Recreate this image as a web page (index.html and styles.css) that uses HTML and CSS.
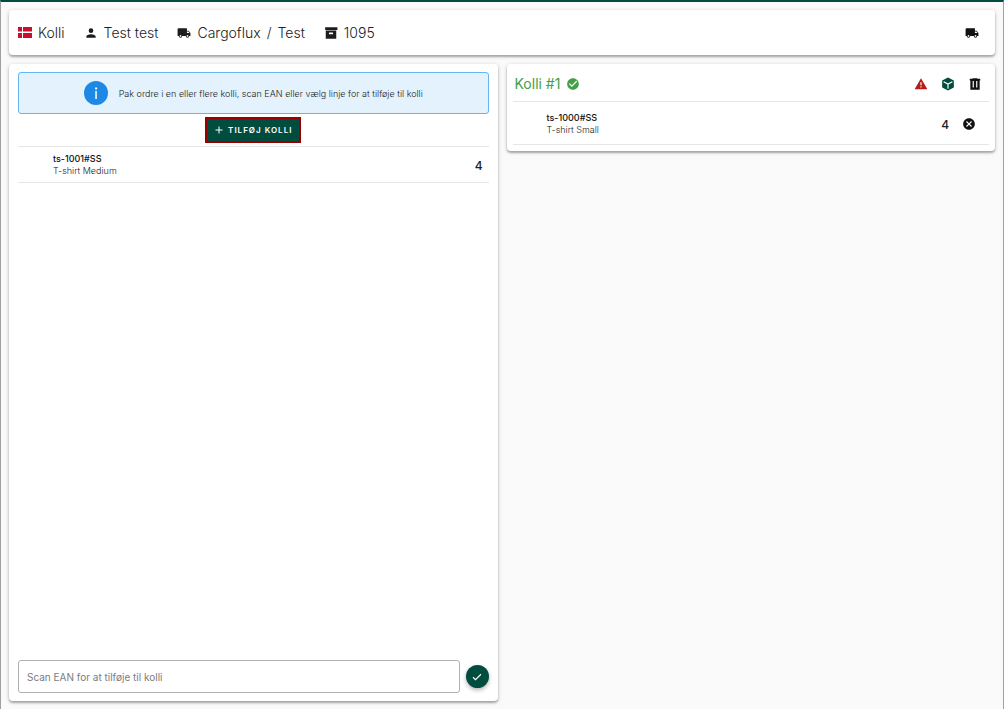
FILE: index.html
```html
<!DOCTYPE html>
<html lang="da">
<head>
    <meta charset="UTF-8">
    <meta name="viewport" content="width=device-width, initial-scale=1.0">
    <title>Kolli</title>
    <link rel="stylesheet" href="styles.css">
</head>
<body>
    <header class="card order-bar">
        <h1 class="order-item">
            <svg class="flag" viewBox="0 0 14 11" aria-hidden="true">
                <path fill="#c8102e" d="M0 0h4v4.5H0zM5 0h9v4.5H5zM0 6h4v5H0zM5 6h9v5H5z"/>
            </svg>
            Kolli
        </h1>
        <div class="order-item">
            <svg class="icon" viewBox="0 0 24 24" aria-hidden="true"><path d="M12 4a4 4 0 0 1 4 4 4 4 0 0 1-4 4 4 4 0 0 1-4-4 4 4 0 0 1 4-4m0 10c4.42 0 8 1.79 8 4v2H4v-2c0-2.21 3.58-4 8-4z"/></svg>
            Test test
        </div>
        <div class="order-item">
            <svg class="icon" viewBox="0 0 24 24" aria-hidden="true"><path d="M18 18.5a1.5 1.5 0 0 1-1.5-1.5 1.5 1.5 0 0 1 1.5-1.5 1.5 1.5 0 0 1 1.5 1.5 1.5 1.5 0 0 1-1.5 1.5m1.5-9 1.96 2.5H17V9.5m-11 9A1.5 1.5 0 0 1 4.5 17 1.5 1.5 0 0 1 6 15.5 1.5 1.5 0 0 1 7.5 17 1.5 1.5 0 0 1 6 18.5M20 8h-3V4H3c-1.11 0-2 .89-2 2v11h2a3 3 0 0 0 3 3 3 3 0 0 0 3-3h6a3 3 0 0 0 3 3 3 3 0 0 0 3-3h2v-5z"/></svg>
            <span>Cargoflux</span><span>/</span><span>Test</span>
        </div>
        <div class="order-item">
            <svg class="icon" viewBox="0 0 24 24" aria-hidden="true"><path d="M2 2h21v5H2zM3 7.5h18V22H3zM9 11a.5.5 0 0 0-.5.5V14h7v-2.5a.5.5 0 0 0-.5-.5z" fill-rule="evenodd"/></svg>
            1095
        </div>
        <button class="icon-button ship" type="button" aria-label="Forsendelse">
            <svg class="icon" viewBox="0 0 24 24" aria-hidden="true"><path d="M18 18.5a1.5 1.5 0 0 1-1.5-1.5 1.5 1.5 0 0 1 1.5-1.5 1.5 1.5 0 0 1 1.5 1.5 1.5 1.5 0 0 1-1.5 1.5m1.5-9 1.96 2.5H17V9.5m-11 9A1.5 1.5 0 0 1 4.5 17 1.5 1.5 0 0 1 6 15.5 1.5 1.5 0 0 1 7.5 17 1.5 1.5 0 0 1 6 18.5M20 8h-3V4H3c-1.11 0-2 .89-2 2v11h2a3 3 0 0 0 3 3 3 3 0 0 0 3-3h6a3 3 0 0 0 3 3 3 3 0 0 0 3-3h2v-5z"/></svg>
        </button>
    </header>

    <main class="columns">
        <section class="card order-lines">
            <div class="info-box">
                <svg class="info-icon" viewBox="0 0 24 24" aria-hidden="true">
                    <circle cx="12" cy="12" r="12" fill="#1e88e5"/>
                    <path fill="#fff" d="M11.3 10h1.5v8h-1.500zM11.100 6.500h2v2h-2z"/>
                </svg>
                <p>Pak ordre i en eller flere kolli, scan EAN eller vælg linje for at tilføje til kolli</p>
            </div>
            <button class="add-button" type="button">
                <svg viewBox="0 0 10 10" aria-hidden="true"><path d="M5 1.5v7M1.5 5h7" stroke="#fff" stroke-width="1"/></svg>
                TILFØJ KOLLI
            </button>
            <ul class="lines">
                <li class="line">
                    <div class="product">
                        <strong>ts-1001#SS</strong>
                        <span>T-shirt Medium</span>
                    </div>
                    <span class="quantity">4</span>
                </li>
            </ul>
            <form class="scan">
                <input type="text" aria-label="Scan EAN" placeholder="Scan EAN for at tilføje til kolli">
                <button class="submit-button" type="button" aria-label="Tilføj">
                    <svg viewBox="0 0 24 24" aria-hidden="true"><path d="M4 12.5 9 17.5 20 6.5" fill="none" stroke="#fff" stroke-width="2.2"/></svg>
                </button>
            </form>
        </section>

        <section class="card package">
            <div class="package-header">
                <h2>Kolli #1</h2>
                <svg class="icon done" viewBox="0 0 24 24" aria-hidden="true"><path d="M12 2C6.5 2 2 6.5 2 12s4.5 10 10 10 10-4.5 10-10S17.5 2 12 2m-2 15-5-5 1.41-1.41L10 14.17l7.59-7.59L19 8z"/></svg>
                <div class="actions">
                    <button class="icon-button warning" type="button" aria-label="Advarsel">
                        <svg class="icon" viewBox="0 0 24 24" aria-hidden="true"><path d="M13 14h-2V9h2m0 9h-2v-2h2M1 21h22L12 2z"/></svg>
                    </button>
                    <button class="icon-button box" type="button" aria-label="Pakke">
                        <svg class="icon" viewBox="0 0 24 24" aria-hidden="true"><path d="M12 1 22 6v12l-10 5L2 18V6z"/><path d="M4.5 8 12 12l7.5-4M12 12v8" fill="none" stroke="#fff" stroke-width="2"/></svg>
                    </button>
                    <button class="icon-button" type="button" aria-label="Slet">
                        <svg class="icon" viewBox="0 0 24 24" aria-hidden="true"><path fill-rule="evenodd" d="M8 2h8v1h5v3h-1v16H4V6H3V3h5zM8 7v11h2V7zM14 7v11h2V7z"/></svg>
                    </button>
                </div>
            </div>
            <ul class="lines">
                <li class="line">
                    <div class="product">
                        <strong>ts-1000#SS</strong>
                        <span>T-shirt Small</span>
                    </div>
                    <span class="quantity">4</span>
                    <button class="icon-button" type="button" aria-label="Fjern">
                        <svg class="icon" viewBox="0 0 24 24" aria-hidden="true"><path d="M12 2c5.53 0 10 4.47 10 10s-4.47 10-10 10S2 17.53 2 12 6.47 2 12 2m3.59 5L12 10.59 8.41 7 7 8.41 10.59 12 7 15.59 8.41 17 12 13.41 15.59 17 17 15.59 13.41 12 17 8.41z"/></svg>
                    </button>
                </li>
            </ul>
        </section>
    </main>
</body>
</html>
```

FILE: styles.css
```css
* {
    box-sizing: border-box;
}
body {
    font-family: Inter, sans-serif;
    margin: 0;
    padding: 8px;
    display: flex;
    flex-direction: column;
    gap: 9px;
    min-height: 100vh;
    background: #fafafa;
    border: 1px solid #a0a0a0;
    border-top: 2px solid #004d40;
    border-bottom: 0;
    color: #212121;
}
h1, h2, p, ul {
    margin: 0;
    padding: 0;
    font-weight: 400;
}
button, input {
    font-family: inherit;
}
button {
    padding: 0;
    border: none;
    cursor: pointer;
}
svg {
    display: block;
    flex: none;
}
.card {
    background: #fff;
    border-radius: 4px;
    box-shadow: 0 2px 2px rgba(0, 0, 0, 0.24), 0 1px 4px rgba(0, 0, 0, 0.2);
}
.icon {
    width: 14px;
    height: 14px;
    fill: currentColor;
}
.icon-button {
    background: none;
    color: #111;
}

/* Top bar */
.order-bar {
    display: flex;
    align-items: center;
    gap: 19px;
    height: 45px;
    padding: 0 16px 0 9px;
}
.order-item {
    display: flex;
    align-items: center;
    gap: 6px;
    font-size: 14px;
    font-weight: 300;
    line-height: 20px;
    color: #212121;
}
.order-item .icon {
    color: #1c1c1c;
}
.flag {
    width: 14px;
    height: 11px;
}
.ship {
    margin-left: auto;
}

/* Columns */
.columns {
    display: grid;
    grid-template-columns: 1fr 1fr;
    gap: 9px;
    flex: 1;
    align-items: start;
}
.order-lines {
    display: flex;
    flex-direction: column;
    align-self: stretch;
    padding: 8px 9px;
}
.info-box {
    display: flex;
    align-items: center;
    justify-content: center;
    gap: 11px;
    height: 42px;
    border: 1px solid #64b5f6;
    border-radius: 3px;
    background: #e3f2fd;
    font-size: 9px;
    color: #212121;
}
.info-box p {
    font-weight: 300;
}
.info-icon {
    width: 24px;
    height: 24px;
}
.add-button {
    display: flex;
    align-items: center;
    align-self: center;
    gap: 4px;
    height: 26px;
    margin: 3px 0;
    padding: 0 7px;
    border: 2px solid #990000;
    background: #004d40;
    color: #fff;
    font-size: 8px;
    font-weight: 600;
    letter-spacing: 1px;
}
.add-button svg {
    width: 10px;
    height: 10px;
}
.lines {
    list-style: none;
}
.line {
    display: flex;
    align-items: center;
    padding: 6px 6px 5px 35px;
    border-top: 1px solid #e6e6e6;
    border-bottom: 1px solid #e6e6e6;
}
.product {
    display: flex;
    flex-direction: column;
    font-size: 9px;
    font-weight: 300;
    line-height: 12px;
    color: #212121;
}
.product strong {
    font-weight: 500;
    color: #111;
}
.quantity {
    margin-left: auto;
    font-size: 12px;
    font-weight: 500;
}
.scan {
    display: flex;
    align-items: center;
    gap: 6px;
    margin-top: auto;
}
.scan input {
    flex: 1;
    min-width: 0;
    height: 33px;
    padding: 0 8px;
    border: 1px solid #b0b0b0;
    border-radius: 3px;
    background: #fff;
    font-size: 10px;
}
.scan input::placeholder {
    color: #7c7c7c;
}
.submit-button {
    display: flex;
    align-items: center;
    justify-content: center;
    width: 23px;
    height: 23px;
    border-radius: 50%;
    background: #004d40;
    box-shadow: 0 2px 4px rgba(0, 0, 0, 0.3);
}
.submit-button svg {
    width: 12px;
    height: 12px;
}

/* Package */
.package {
    padding: 0 6px 6px;
}
.package-header {
    display: flex;
    align-items: center;
    gap: 6px;
    height: 37px;
    padding: 2px 7px 0 2px;
}
.package-header h2 {
    font-size: 14px;
    color: #43a047;
}
.done {
    color: #43a047;
}
.actions {
    display: flex;
    gap: 13px;
    margin-left: auto;
}
.warning {
    color: #b71c1c;
}
.box {
    color: #004d40;
}
.package .line {
    gap: 13px;
    padding: 10px 13px 8px 34px;
}
```
